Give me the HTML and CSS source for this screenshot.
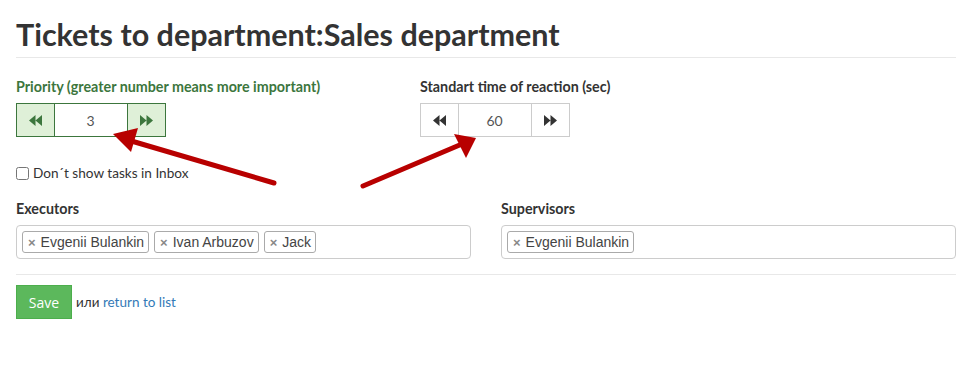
FILE: index.html
```html
<!DOCTYPE html>
<html lang="en">
<head>
    <meta charset="UTF-8">
    <title>Tickets to department</title>
    <link rel="stylesheet" href="styles.css">
</head>
<body>
    <div class="page">
        <h1 class="page-title">Tickets to department:Sales department</h1>

        <div class="spinners">
            <!-- Priority -->
            <div class="field field-priority">
                <label class="field-label success">Priority (greater number means more important)</label>
                <div class="spinner success">
                    <button class="spin-btn"><svg width="13" height="11" viewBox="0 0 13 11"><path d="M6.5 0L0 5.5L6.5 11Z M13 0L6.5 5.5L13 11Z"/></svg></button>
                    <input class="spin-input" type="text" value="3">
                    <button class="spin-btn"><svg width="13" height="11" viewBox="0 0 13 11"><path d="M0 0L6.5 5.5L0 11Z M6.5 0L13 5.5L6.5 11Z"/></svg></button>
                </div>
            </div>

            <!-- Reaction time -->
            <div class="field">
                <label class="field-label">Standart time of reaction (sec)</label>
                <div class="spinner">
                    <button class="spin-btn"><svg width="13" height="11" viewBox="0 0 13 11"><path d="M6.5 0L0 5.5L6.5 11Z M13 0L6.5 5.5L13 11Z"/></svg></button>
                    <input class="spin-input" type="text" value="60">
                    <button class="spin-btn"><svg width="13" height="11" viewBox="0 0 13 11"><path d="M0 0L6.5 5.5L0 11Z M6.5 0L13 5.5L6.5 11Z"/></svg></button>
                </div>
            </div>
        </div>

        <label class="check-row"><input type="checkbox"> Don´t show tasks in Inbox</label>

        <div class="people">
            <div class="field">
                <label class="field-label">Executors</label>
                <div class="tag-box">
                    <span class="tag"><span class="tag-x">×</span>Evgenii Bulankin</span>
                    <span class="tag"><span class="tag-x">×</span>Ivan Arbuzov</span>
                    <span class="tag"><span class="tag-x">×</span>Jack</span>
                </div>
            </div>
            <div class="field">
                <label class="field-label">Supervisors</label>
                <div class="tag-box">
                    <span class="tag"><span class="tag-x">×</span>Evgenii Bulankin</span>
                </div>
            </div>
        </div>

        <div class="actions">
            <button class="btn-save">Save</button>
            <span class="or">или <a href="#">return to list</a></span>
        </div>

        <!-- Annotation arrows -->
        <svg class="arrows" width="976" height="369" viewBox="0 0 976 369">
            <g stroke="#b80000" stroke-width="5" stroke-linecap="round">
                <line x1="274" y1="183" x2="128" y2="140"/>
                <line x1="363" y1="186" x2="462" y2="144"/>
            </g>
            <g fill="#b80000">
                <path d="M113 134L138 128L131 152Z"/>
                <path d="M476 138L466 158L454 134Z"/>
            </g>
        </svg>
    </div>
</body>
</html>
```

FILE: styles.css
```css
/* General styles */
body {
    margin: 0;
    font-family: Lato, "Open Sans", sans-serif;
    font-size: 14px;
    color: #333;
    background: #fff;
}

.page {
    position: relative;
    padding: 0 20px 0 16px;
    width: 940px;
}

.page-title {
    margin: 0;
    padding: 18px 0 6px;
    font-size: 30.5px;
    font-weight: 700;
    line-height: 33px;
    color: #333;
    border-bottom: 1px solid #e8e8e8;
}

.field-label {
    display: block;
    font-size: 14.3px;
    font-weight: 700;
    line-height: 16px;
    margin-bottom: 8px;
}

.field-label.success {
    color: #3c763d;
}

/* Spinners */
.spinners {
    display: flex;
    padding-top: 21px;
}

.field-priority {
    width: 404px;
}

.spinner {
    display: flex;
    width: 150px;
    height: 34px;
}

.spin-btn {
    width: 39px;
    height: 34px;
    padding: 0;
    border: 1px solid #ccc;
    background: #fff;
    display: flex;
    align-items: center;
    justify-content: center;
    fill: #333;
}

.spin-input {
    width: 72px;
    height: 34px;
    box-sizing: border-box;
    border: 1px solid #ccc;
    border-left: none;
    border-right: none;
    text-align: center;
    font-family: Lato, sans-serif;
    font-size: 14px;
    color: #555;
    padding: 0;
}

.spinner .spin-btn:last-child {
    width: 40px;
}

.spinner.success .spin-btn {
    background: #dff0d8;
    border-color: #3c763d;
    fill: #3c763d;
}

.spinner.success .spin-input {
    border-color: #3c763d;
}

/* Checkbox */
.check-row {
    display: flex;
    align-items: center;
    margin-top: 28px;
    font-size: 13.6px;
    line-height: 16px;
}

.check-row input {
    margin: 0 4px 0 0;
    width: 13px;
    height: 13px;
}

/* Executors / supervisors */
.people {
    display: grid;
    grid-template-columns: 1fr 1fr;
    gap: 30px;
    margin-top: 20px;
    padding-bottom: 15px;
    border-bottom: 1px solid #e8e8e8;
}

.tag-box {
    display: flex;
    gap: 5px;
    height: 34px;
    box-sizing: border-box;
    padding: 5px 5px;
    border: 1px solid #ccc;
    border-radius: 4px;
}

.tag {
    display: flex;
    align-items: center;
    height: 22px;
    box-sizing: border-box;
    padding: 0 4px 0 5px;
    border: 1px solid #aaa;
    border-radius: 3px;
    background: #fff;
    font-family: "Liberation Sans", Arial, sans-serif;
    font-size: 14px;
    color: #444;
}

.tag-x {
    color: #888;
    font-weight: 700;
    font-size: 13px;
    margin-right: 5px;
}

/* Form actions */
.actions {
    display: flex;
    align-items: center;
    padding-top: 10px;
}

.btn-save {
    width: 56px;
    height: 34px;
    border: 1px solid #4cae4c;
    background: #5cb85c;
    color: #fff;
    font-family: "Open Sans", sans-serif;
    font-size: 14px;
    padding: 0;
    margin-right: 4px;
}

.or {
    font-family: Lato, sans-serif;
    font-size: 13.5px;
    color: #333;
}

.or a {
    color: #337ab7;
    text-decoration: none;
}

.arrows {
    position: absolute;
    top: 0;
    left: 0;
    pointer-events: none;
}
```
